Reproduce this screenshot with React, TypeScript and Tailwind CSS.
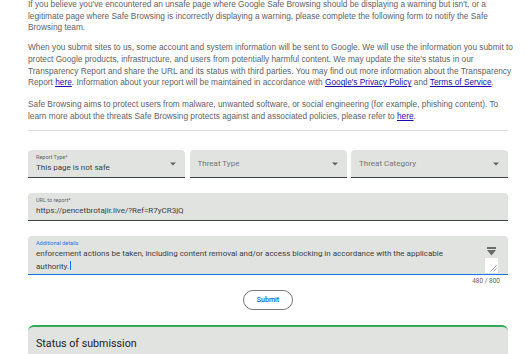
import * as React from 'react';

const sans = { fontFamily: '"Liberation Sans", Arial, sans-serif' };
const roboto = { fontFamily: 'Roboto, "Noto Sans", sans-serif' };

function Caret() {
  return (
    <svg width="6" height="4" viewBox="0 0 6 4" className="shrink-0">
      <path d="M0 0.5h6L3 3.5z" fill="#5f6368" />
    </svg>
  );
}

function Link({ children }: { children: React.ReactNode }) {
  return <a className="text-[#1a0dab] underline underline-offset-[1px]">{children}</a>;
}

function Line({ children }: { children: React.ReactNode }) {
  return <span className="block whitespace-nowrap">{children}</span>;
}

function SelectField({ label, value, placeholder }: { label?: string; value?: string; placeholder?: string }) {
  return (
    <div className="flex h-[28px] items-center rounded-t-[4px] border-b border-[#3c4043] bg-[#e1e3e1] pl-[8px] pr-[9px]">
      <div className="flex min-w-0 flex-1 flex-col">
        {label ? (
          <>
            <span className="text-[5.5px] leading-[7px] text-[#5f6368]">{label}</span>
            <span className="mt-[2px] text-[8px] leading-[10px] text-[#3c4043]">{value}</span>
          </>
        ) : (
          <span className="text-[8px] leading-[10px] text-[#70757a]">{placeholder}</span>
        )}
      </div>
      <Caret />
    </div>
  );
}

export default function App() {
  return (
    <div className="h-[354px] w-[526px] overflow-hidden bg-white">
      <div className="ml-[28px] w-[480px]">
        <div className="text-[8.3px] leading-[11.7px] text-[#5f6368]" style={sans}>
          <p className="-mt-px">
            <Line>If you believe you've encountered an unsafe page where Google Safe Browsing should be displaying a warning but isn't, or a</Line>
            <Line>legitimate page where Safe Browsing is incorrectly displaying a warning, please complete the following form to notify the Safe</Line>
            <Line>Browsing team.</Line>
          </p>
          <p className="mt-[8px]">
            <Line>When you submit sites to us, some account and system information will be sent to Google. We will use the information you submit to</Line>
            <Line>protect Google products, infrastructure, and users from potentially harmful content. We may update the site's status in our</Line>
            <Line>Transparency Report and share the URL and its status with third parties. You may find out more information about the Transparency</Line>
            <Line>
              Report <Link>here</Link>. Information about your report will be maintained in accordance with{' '}
              <Link>Google's Privacy Policy</Link> and <Link>Terms of Service</Link>.
            </Line>
          </p>
          <p className="mt-[10px]">
            <Line>Safe Browsing aims to protect users from malware, unwanted software, or social engineering (for example, phishing content). To</Line>
            <Line>
              learn more about the threats Safe Browsing protects against and associated policies, please refer to <Link>here</Link>.
            </Line>
          </p>
        </div>

        <div className="mt-[8px] h-px bg-[#dadce0]" />

        <div style={roboto}>
          <div className="mt-[19px] grid grid-cols-[157px_157px_157px] justify-between">
            <SelectField label="Report Type*" value="This page is not safe" />
            <SelectField placeholder="Threat Type" />
            <SelectField placeholder="Threat Category" />
          </div>

          <div className="mt-[15px] flex h-[28px] flex-col justify-center rounded-t-[4px] border-b border-[#3c4043] bg-[#e1e3e1] px-[8px]">
            <span className="text-[5.5px] leading-[7px] text-[#5f6368]">URL to report*</span>
            <span className="mt-[2px] text-[8px] leading-[10px] text-[#3c4043]">https://pencetbrotajir.live/?Ref=R7yCR3jQ</span>
          </div>

          <div className="relative mt-[15px] h-[39px] rounded-t-[4px] border-b border-[#1a73e8] bg-[#e1e3e1] px-[8px] pt-[4px]">
            <div className="text-[5.5px] leading-[7px] text-[#1a73e8]">Additional details</div>
            <div className="mt-[1px] pr-[24px] text-[8px] leading-[12px] text-[#3c4043]">
              enforcement actions be taken, including content removal and/or access blocking in accordance with the applicable
              authority.<span className="ml-px inline-block h-[9px] w-px translate-y-[1px] bg-[#1a73e8]" />
            </div>
            <div className="absolute right-[10px] top-[11px] flex w-[13px] flex-col items-center">
              <div className="h-[1.5px] w-[9px] bg-[#6b6b6b]" />
              <svg width="9" height="6" viewBox="0 0 9 6" className="mt-[1px]">
                <path d="M0 0h9L4.5 5.5z" fill="#6b6b6b" />
              </svg>
              <div className="mt-[2px] flex h-[15px] w-[13px] items-end justify-end bg-white pb-[1px] pr-[1px]">
                <svg width="8" height="8" viewBox="0 0 8 8">
                  <path d="M7.5 1.5L1.5 7.5M7.5 4.5L4.5 7.5" stroke="#7a7a7a" strokeWidth="0.8" />
                </svg>
              </div>
            </div>
          </div>

          <div className="mt-[3px] pr-[8px] text-right text-[6.5px] leading-[7px] text-[#5f6368]">480 / 800</div>

          <div className="mt-[5px] flex justify-center">
            <button className="flex h-[20px] w-[50px] items-center justify-center rounded-full border border-[#747775] bg-white text-[7px] font-medium text-[#0b57d0]">
              Submit
            </button>
          </div>

          <div className="mt-[15px] h-[40px] rounded-t-[6px] border-t-2 border-[#34a853] bg-[#e1e3e1] px-[8px] pt-[10px]">
            <div className="text-[10.7px] leading-[14px] text-[#202124]">Status of submission</div>
          </div>
        </div>
      </div>
    </div>
  );
}
